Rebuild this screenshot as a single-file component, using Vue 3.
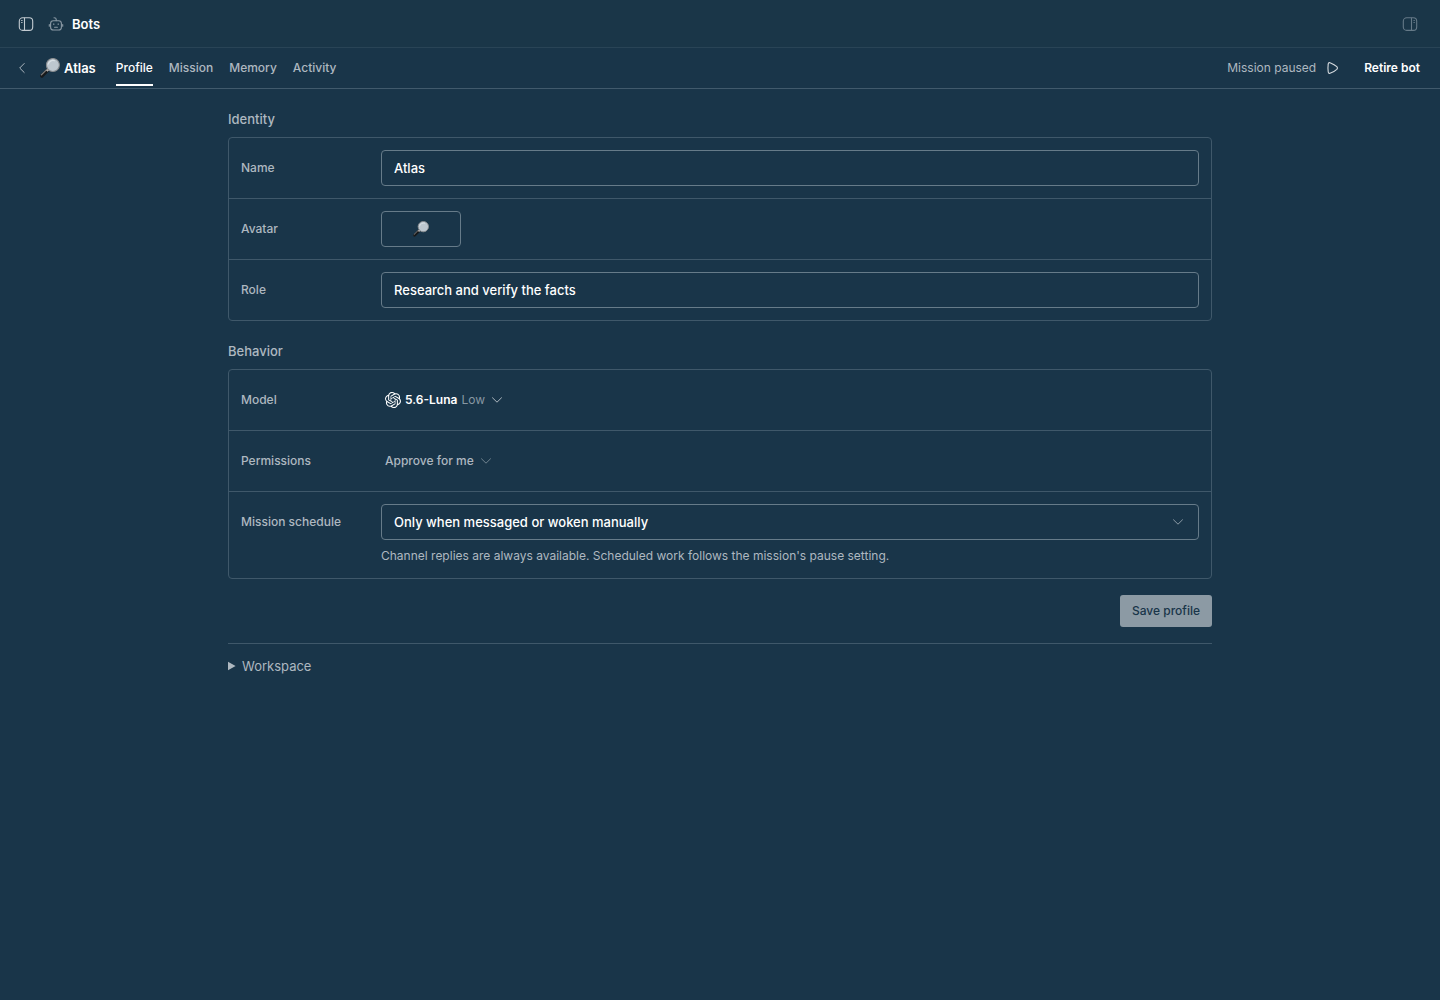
<template>
  <div class="page">
    <!-- top bar -->
    <header class="topbar">
      <button class="icon-btn" type="button" aria-label="Toggle sidebar">
        <svg width="16" height="16" viewBox="0 0 16 16" fill="none" stroke="currentColor" stroke-width="1.1">
          <rect x="1.3" y="1.8" width="13.4" height="12.6" rx="3.4" />
          <path d="M6.5 1.8v12.6M3.2 4.5h1.3M3.2 6.5h1.3" />
        </svg>
      </button>
      <div class="topbar-title">
        <svg class="robot" width="16" height="16" viewBox="0 0 16 16" fill="none" stroke="currentColor" stroke-width="1.1" stroke-linecap="round">
          <path d="M6 1.8q2.2 0 2.2 1.4v1.4" />
          <rect x="2.6" y="4.8" width="10.8" height="9.2" rx="2.8" />
          <path d="M1.3 8.6v1.6M14.7 8.6v1.6M5.8 7.9v.5M10.2 7.9v.5M6.6 11.3h2.8" />
        </svg>
        <h1>Bots</h1>
      </div>
      <button class="icon-btn dim push" type="button" aria-label="Toggle details">
        <svg width="16" height="16" viewBox="0 0 16 16" fill="none" stroke="currentColor" stroke-width="1.1">
          <rect x="1.3" y="1.8" width="13.4" height="12.6" rx="3.4" />
          <path d="M9.5 1.8v12.6M11.5 4.5h1.3M11.5 6.5h1.3" />
        </svg>
      </button>
    </header>

    <!-- bot bar -->
    <div class="botbar">
      <button class="back" type="button" aria-label="Back">
        <svg width="12" height="12" viewBox="0 0 12 12" fill="none" stroke="currentColor" stroke-linecap="round" stroke-linejoin="round">
          <path d="M8.2 1.5 3.7 6l4.5 4.5" />
        </svg>
      </button>
      <div class="bot-name">
        <svg width="20" height="20" viewBox="0 0 20 20">
          <path d="M1.9 18 7.3 12.6" stroke="#17191b" stroke-width="3.4" stroke-linecap="round" />
          <path d="M1.4 16.8 6.4 11.8" stroke="#85807d" stroke-width="1.2" stroke-linecap="round" />
          <path d="m6.8 13 2-2" stroke="#b5b3b1" stroke-width="2.2" />
          <circle cx="12.9" cy="7" r="6.5" fill="#bdc7cf" stroke="#8a8d90" stroke-width="1.1" />
          <path d="M8.2 6.2a5 5 0 0 1 6.3-3.5" fill="none" stroke="#d9e0e5" stroke-width="1.2" stroke-linecap="round" />
        </svg>
        <strong>Atlas</strong>
      </div>
      <nav class="tabs">
        <a v-for="tab in tabs" :key="tab" href="#" :class="{ active: tab === activeTab }" @click.prevent="activeTab = tab">{{ tab }}</a>
      </nav>
      <div class="bot-actions">
        <span class="status">Mission paused</span>
        <button class="play" type="button" aria-label="Resume mission">
          <svg width="14" height="14" viewBox="0 0 14 14" fill="none" stroke="currentColor" stroke-width="1.1" stroke-linejoin="round">
            <path d="M2.2 3.4c0-1.6 1-2.2 2.4-1.5q3.8 1.6 6.2 3.8c.8.8.8 1.8 0 2.6q-2.4 2.2-6.2 3.8c-1.4.7-2.4.1-2.4-1.5q-.5-3.6 0-7.2z" />
          </svg>
        </button>
        <button class="retire" type="button">Retire bot</button>
      </div>
    </div>

    <main class="content">
      <form @submit.prevent>
        <h2>Identity</h2>
        <section class="card">
          <div class="row">
            <label for="name">Name</label>
            <input id="name" v-model="name" class="field" type="text" />
          </div>
          <div class="row">
            <label for="avatar">Avatar</label>
            <button id="avatar" class="field avatar" type="button">
              <svg width="16" height="16" viewBox="0 0 20 20">
                <path d="M1.9 18 7.3 12.6" stroke="#17191b" stroke-width="3.4" stroke-linecap="round" />
                <path d="M1.4 16.8 6.4 11.8" stroke="#85807d" stroke-width="1.2" stroke-linecap="round" />
                <path d="m6.8 13 2-2" stroke="#b5b3b1" stroke-width="2.2" />
                <circle cx="12.9" cy="7" r="6.5" fill="#bdc7cf" stroke="#8a8d90" stroke-width="1.1" />
                <path d="M8.2 6.2a5 5 0 0 1 6.3-3.5" fill="none" stroke="#d9e0e5" stroke-width="1.2" stroke-linecap="round" />
              </svg>
            </button>
          </div>
          <div class="row">
            <label for="role">Role</label>
            <input id="role" v-model="role" class="field" type="text" />
          </div>
        </section>

        <h2>Behavior</h2>
        <section class="card">
          <div class="row">
            <label for="model">Model</label>
            <button id="model" class="picker" type="button">
              <svg class="logo" width="16" height="16" viewBox="0 0 24 24" fill="currentColor">
                <path d="M22.2819 9.8211a5.9847 5.9847 0 0 0-.5157-4.9108 6.0462 6.0462 0 0 0-6.5098-2.9A6.0651 6.0651 0 0 0 4.9807 4.1818a5.9847 5.9847 0 0 0-3.9977 2.9 6.0462 6.0462 0 0 0 .7427 7.0966 5.98 5.98 0 0 0 .511 4.9107 6.051 6.051 0 0 0 6.5146 2.9001A5.9847 5.9847 0 0 0 13.2599 24a6.0557 6.0557 0 0 0 5.7718-4.2058 5.9894 5.9894 0 0 0 3.9977-2.9001 6.0557 6.0557 0 0 0-.7475-7.0729zm-9.022 12.6081a4.4755 4.4755 0 0 1-2.8764-1.0408l.1419-.0804 4.7783-2.7582a.7948.7948 0 0 0 .3927-.6813v-6.7369l2.02 1.1686a.071.071 0 0 1 .038.052v5.5826a4.504 4.504 0 0 1-4.4945 4.4944zm-9.6607-4.1254a4.4708 4.4708 0 0 1-.5346-3.0137l.142.0852 4.783 2.7582a.7712.7712 0 0 0 .7806 0l5.8428-3.3685v2.3324a.0804.0804 0 0 1-.0332.0615L9.74 19.9502a4.4992 4.4992 0 0 1-6.1408-1.6464zM2.3408 7.8956a4.485 4.485 0 0 1 2.3655-1.9728V11.6a.7664.7664 0 0 0 .3879.6765l5.8144 3.3543-2.0201 1.1685a.0757.0757 0 0 1-.071 0l-4.8303-2.7865A4.504 4.504 0 0 1 2.3408 7.872zm16.5963 3.8558L13.1038 8.364 15.1192 7.2a.0757.0757 0 0 1 .071 0l4.8303 2.7913a4.4944 4.4944 0 0 1-.6765 8.1042v-5.6772a.79.79 0 0 0-.407-.667zm2.0107-3.0231l-.142-.0852-4.7735-2.7818a.7759.7759 0 0 0-.7854 0L9.409 9.2297V6.8974a.0662.0662 0 0 1 .0284-.0615l4.8303-2.7866a4.4992 4.4992 0 0 1 6.6802 4.66zM8.3065 12.863l-2.02-1.1638a.0804.0804 0 0 1-.038-.0567V6.0742a4.4992 4.4992 0 0 1 7.3757-3.4537l-.142.0805L8.704 5.459a.7948.7948 0 0 0-.3927.6813zm1.0976-2.3654l2.602-1.4998 2.6069 1.4998v2.9994l-2.5974 1.4997-2.6067-1.4997Z" />
              </svg>
              <b>5.6-Luna</b>
              <span class="effort">Low</span>
              <svg class="chevron" width="12" height="12" viewBox="0 0 12 12" fill="none" stroke="currentColor" stroke-linecap="round" stroke-linejoin="round">
                <path d="M1.5 3.8 6 8.2l4.5-4.4" />
              </svg>
            </button>
          </div>
          <div class="row">
            <label for="permissions">Permissions</label>
            <button id="permissions" class="picker" type="button">
              <span>Approve for me</span>
              <svg class="chevron faint" width="12" height="12" viewBox="0 0 12 12" fill="none" stroke="currentColor" stroke-linecap="round" stroke-linejoin="round">
                <path d="M1.5 3.8 6 8.2l4.5-4.4" />
              </svg>
            </button>
          </div>
          <div class="row">
            <label for="schedule">Mission schedule</label>
            <div class="stack">
              <div class="select-wrap">
                <select id="schedule" v-model="schedule" class="field">
                  <option value="manual">Only when messaged or woken manually</option>
                </select>
                <svg class="select-arrow" width="12" height="12" viewBox="0 0 12 12" fill="none" stroke="currentColor" stroke-linecap="round" stroke-linejoin="round">
                  <path d="M1.5 3.8 6 8.2l4.5-4.4" />
                </svg>
              </div>
              <p class="hint">Channel replies are always available. Scheduled work follows the mission's pause setting.</p>
            </div>
          </div>
        </section>

        <div class="form-actions">
          <button class="save" type="submit">Save profile</button>
        </div>
      </form>

      <details class="workspace">
        <summary>
          <svg width="8" height="10" viewBox="0 0 8 10" fill="currentColor"><path d="M0 .8 7.6 5 0 9.2z" /></svg>
          Workspace
        </summary>
      </details>
    </main>
  </div>
</template>

<script setup>
import { ref } from 'vue'

const tabs = ['Profile', 'Mission', 'Memory', 'Activity']
const activeTab = ref('Profile')

const name = ref('Atlas')
const role = ref('Research and verify the facts')
const schedule = ref('manual')
</script>

<style>
body {
  background: #193549;
}
</style>

<style scoped>
.page {
  min-height: 100vh;
  background: #193549;
  color: #aeb8c0;
  font-family: Inter, "Liberation Sans", sans-serif;
  font-size: 12px;
  font-weight: 500;
  line-height: 20px;
}

.page * {
  box-sizing: border-box;
}

button,
input,
select {
  margin: 0;
  padding: 0;
  border: none;
  background: none;
  color: inherit;
  font: inherit;
}

svg {
  display: block;
  flex-shrink: 0;
}

/* top bar */
.topbar {
  display: flex;
  align-items: center;
  gap: 14px;
  height: 48px;
  padding: 0 22px 0 18px;
  background: #1a3648;
  border-bottom: 1px solid #294456;
}

.icon-btn {
  color: #c3cbd1;
}

.icon-btn.dim {
  color: #667a88;
}

.push {
  margin-left: auto;
}

.topbar-title {
  display: flex;
  align-items: center;
  gap: 8px;
}

.robot {
  color: #8b9aa5;
}

h1 {
  margin: 0;
  color: #fff;
  font-size: 13px;
  font-weight: 600;
}

/* bot bar */
.botbar {
  display: flex;
  align-items: center;
  height: 41px;
  padding: 0 20px 0 16px;
  border-bottom: 1px solid #415a6c;
}

.back {
  margin-right: 12px;
}

.bot-name {
  display: flex;
  align-items: center;
  gap: 4px;
  margin-right: 20px;
  color: #fff;
  font-size: 13px;
}

.bot-name strong {
  font-weight: 600;
}

.tabs {
  display: flex;
  gap: 16px;
}

.tabs a {
  padding: 8px 0 6px;
  border-bottom: 2px solid transparent;
  color: inherit;
  text-decoration: none;
}

.tabs a.active {
  border-color: #fff;
  color: #fff;
}

.bot-actions {
  display: flex;
  align-items: center;
  margin-left: auto;
}

.status {
  font-weight: 400;
}

.play {
  margin: 0 24px 0 10px;
  color: #d5dbdf;
}

.retire {
  color: #fff;
  font-weight: 600;
}

/* content */
.content {
  max-width: 1024px;
  margin: 0 auto;
  padding: 0 20px 20px;
  box-sizing: border-box;
}

h2 {
  margin: 20px 0 8px;
  font-size: 13px;
  font-weight: 500;
}

.card {
  border: 1px solid #3f586a;
  border-radius: 4px;
}

.row {
  display: grid;
  grid-template-columns: 128px minmax(0, 1fr);
  column-gap: 12px;
  padding: 12px;
}

.row + .row {
  border-top: 1px solid #3f586a;
}

.row label {
  padding: 8px 0;
}

.field {
  display: block;
  width: 100%;
  height: 36px;
  padding: 0 12px;
  border: 1px solid #667b89;
  border-radius: 4px;
  color: #fff;
  font-size: 13px;
}

.avatar {
  display: flex;
  align-items: center;
  justify-content: center;
  width: 80px;
}

.picker {
  display: flex;
  align-items: center;
  justify-self: start;
  gap: 4px;
  height: 36px;
  padding: 0 4px;
}

.picker b {
  color: #fff;
  font-weight: 600;
}

.logo {
  color: #fff;
}

.effort {
  color: #8797a3;
  font-weight: 400;
}

.chevron {
  margin-left: 2px;
}

.faint {
  color: #70838f;
}

.select-wrap {
  position: relative;
}

select.field {
  appearance: none;
}

option {
  color: #193549;
}

.select-arrow {
  position: absolute;
  top: 12px;
  right: 15px;
  color: #8b9aa5;
  pointer-events: none;
}

.hint {
  margin: 6px 0 0;
  font-weight: 400;
}

.form-actions {
  display: flex;
  justify-content: flex-end;
  padding: 16px 0;
}

.save {
  height: 32px;
  padding: 0 12px;
  border-radius: 3px;
  background: #8c9aa4;
  color: #193549;
}

.workspace {
  padding-top: 12px;
  border-top: 1px solid #3f586a;
  font-size: 13px;
  font-weight: 400;
}

.workspace summary {
  display: flex;
  align-items: center;
  gap: 6px;
  list-style: none;
}
</style>
